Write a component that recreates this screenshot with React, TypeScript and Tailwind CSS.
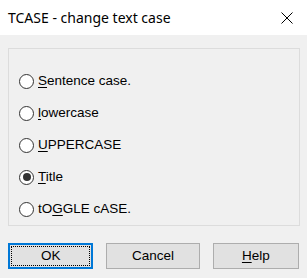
import React from 'react';

const options = [
  { pre: '', key: 'S', post: 'entence case.', checked: false },
  { pre: '', key: 'l', post: 'owercase', checked: false },
  { pre: '', key: 'U', post: 'PPERCASE', checked: false },
  { pre: '', key: 'T', post: 'itle', checked: true },
  { pre: 'tO', key: 'G', post: 'GLE cASE.', checked: false },
];

const Radio = ({ checked }: { checked: boolean }) => (
  <span className="w-[15px] h-[15px] rounded-full border border-[#333] bg-white flex items-center justify-center shrink-0">
    {checked && <span className="w-[8px] h-[8px] rounded-full bg-[#333]" />}
  </span>
);

export default function App() {
  return (
    <div className="w-[307px] h-[278px] bg-[#f0f0f0] flex flex-col font-['Liberation_Sans',Arial,sans-serif] text-[13.5px] text-black">
      <div className="h-[35px] bg-white flex items-center justify-between pl-[8px] pr-[14px] shrink-0">
        <span className="font-['Noto_Sans',sans-serif] text-[14px]">TCASE - change text case</span>
        <svg width="12" height="12" viewBox="0 0 12 12" className="text-black">
          <path d="M0.5 0.5 L11.5 11.5 M11.5 0.5 L0.5 11.5" stroke="currentColor" strokeWidth="1" />
        </svg>
      </div>

      <div className="flex flex-col px-[8px] pt-[13px]">
        <div className="h-[178px] w-[292px] border border-[#dcdcdc] flex flex-col pt-[16px] pl-[10px]">
          {options.map((o, i) => (
            <div key={i} className="h-[32px] flex items-center gap-[4px]">
              <Radio checked={o.checked} />
              <span>
                {o.pre}
                <span className="underline underline-offset-2">{o.key}</span>
                {o.post}
              </span>
            </div>
          ))}
        </div>

        <div className="flex gap-[13px] mt-[17px]">
          <button className="w-[86px] h-[26px] bg-[#e1e1e1] border-2 border-[#0078d7] p-[1px]">
            <span className="w-full h-full border border-dotted border-black flex items-center justify-center">OK</span>
          </button>
          <button className="w-[94px] h-[26px] bg-[#e1e1e1] border border-[#adadad] flex items-center justify-center">
            Cancel
          </button>
          <button className="w-[87px] h-[26px] bg-[#e1e1e1] border border-[#adadad] flex items-center justify-center">
            <span>
              <span className="underline underline-offset-2">H</span>elp
            </span>
          </button>
        </div>
      </div>
    </div>
  );
}
